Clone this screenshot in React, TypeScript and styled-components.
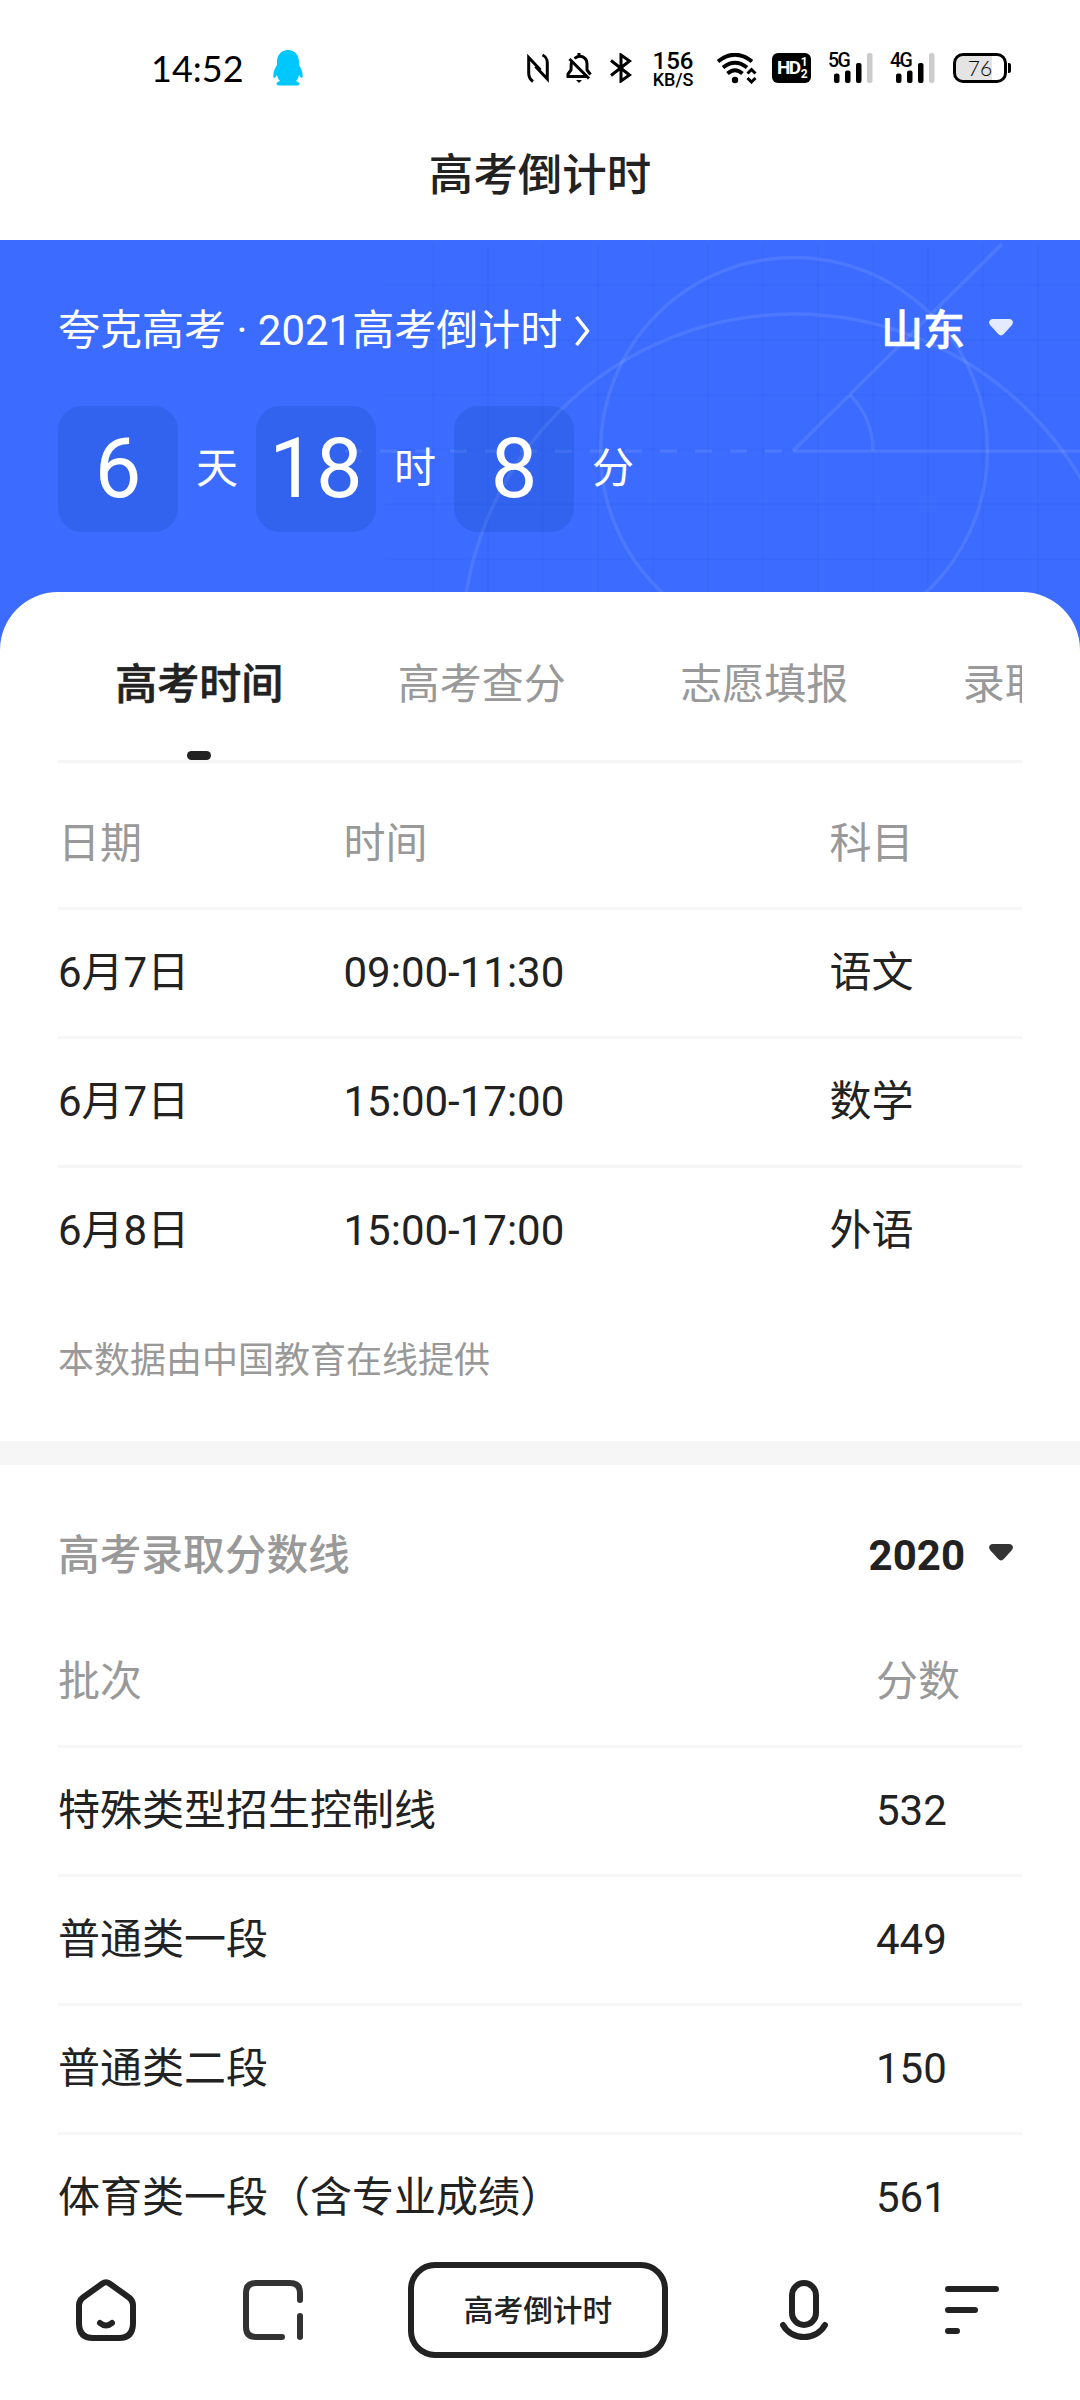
import type { ReactNode } from 'react'
import styled, { createGlobalStyle } from 'styled-components'

const INK = '#222'
const MUTED = '#999'
const BLUE = '#3b6cff'
const LINE = '#f6f6f6'

const countdown = [
	{ value: 6, unit: '天' },
	{ value: 18, unit: '时' },
	{ value: 8, unit: '分' }
]

const tabs = ['高考时间', '高考查分', '志愿填报', '录取时间']

const exams = [
	{ date: '6月7日', time: '09:00-11:30', subject: '语文' },
	{ date: '6月7日', time: '15:00-17:00', subject: '数学' },
	{ date: '6月8日', time: '15:00-17:00', subject: '外语' }
]

const scores = [
	{ batch: '特殊类型招生控制线', score: 532 },
	{ batch: '普通类一段', score: 449 },
	{ batch: '普通类二段', score: 150 },
	{ batch: '体育类一段（含专业成绩）', score: 561 }
]

export default function App () {
	return (
		<Page>
			<GlobalStyle />
			<StatusBar />
			<TitleBar>高考倒计时</TitleBar>
			<Banner>
				<BannerDrawing />
				<BannerHead>
					<BannerLink>
						夸克高考 · 2021高考倒计时
						<svg width='16' height='30' viewBox='0 0 16 30' fill='none' stroke='#fff' strokeWidth='3.500'>
							<path d='M1.500 1L12.500 15L1.500 29' />
						</svg>
					</BannerLink>
					<Picker $color='#fff'>山东<Caret color='#e5ebff' /></Picker>
				</BannerHead>
				<Countdown>
					{countdown.map(({ value, unit }) => (
						<CountdownPart key={unit}>
							<Digits>{value}</Digits>
							<span>{unit}</span>
						</CountdownPart>
					))}
				</Countdown>
			</Banner>
			<Card>
				<Tabs>
					{tabs.map((tab, i) => <Tab key={tab} $active={i === 0}>{tab}</Tab>)}
				</Tabs>
				<ExamRow $head>
					<span>日期</span><span>时间</span><span>科目</span>
				</ExamRow>
				{exams.map(({ date, time, subject }) => (
					<ExamRow key={subject}>
						<span>{date}</span><span>{time}</span><span>{subject}</span>
					</ExamRow>
				))}
				<Source>本数据由中国教育在线提供</Source>
			</Card>
			<Scores>
				<ScoresHead>
					<h2>高考录取分数线</h2>
					<Picker $color={INK}><b>2020</b><Caret color='#333' /></Picker>
				</ScoresHead>
				<ScoreRow $head>
					<span>批次</span><span>分数</span>
				</ScoreRow>
				{scores.map(({ batch, score }) => (
					<ScoreRow key={batch}>
						<span>{batch}</span><span>{score}</span>
					</ScoreRow>
				))}
			</Scores>
			<BottomBar />
		</Page>
	)
}

function StatusBar () {
	return (
		<Status>
			<Clock>14:52</Clock>
			<StatusIcon $left={31} width='30' height='36' viewBox='0 0 30 36' fill='#00c8ff'>
				<path d='M15 0C8 0 4 5 4 12V15C2 18 0 22 .3 27C.5 29 2 28 4 25C4.500 28 5.500 29.500 7 31C5 31.500 3.500 32.500 3.500 34C3.500 35.500 5 35.500 8 35.500H22C25 35.500 26.500 35.500 26.500 34C26.500 32.500 25 31.500 23 31C24.500 29.500 25.500 28 26 25C28 28 29.500 29 29.700 27C30 22 28 18 26 15V12C26 5 22 0 15 0Z' />
			</StatusIcon>
			<Spacer />
			<StatusIcon width='22' height='30' viewBox='0 0 22 30' fill='none' stroke='#000' strokeWidth='3'>
				<path d='M6 28.500C2.500 26 1.700 24 1.700 20V4.500L13.500 17' />
				<path d='M15.500 2C19.500 4 20.300 6 20.300 10V26L8.500 13.500' />
			</StatusIcon>
			<StatusIcon $left={17} width='26' height='32' viewBox='0 0 26 32' fill='none' stroke='#000' strokeWidth='3'>
				<path d='M8.500 6.500C14 1.500 21 5.500 21 12V18L24.500 22.500' />
				<path d='M5.500 10C5 12 5.200 15 5 18L2 22V24.500H20' />
				<path d='M3.500 7L23 26.500' />
				<path d='M13 1V4' />
				<path d='M10 28H16L13 31Z' fill='#000' stroke='none' />
			</StatusIcon>
			<StatusIcon $left={18} width='22' height='30' viewBox='0 0 22 30' fill='none' stroke='#000' strokeWidth='3'>
				<path d='M1 7.500L19.500 22L11 28V2L19.500 8L1 22.500' />
			</StatusIcon>
			<Speed>
				<b>156</b>
				<span>KB/S</span>
			</Speed>
			<StatusIcon $left={23} width='40' height='31' viewBox='0 0 40 31' fill='none' stroke='#000'>
				<path d='M1 8.500Q18 -5 35 8.500' strokeWidth='4' />
				<path d='M6 14.500Q18 5 30 14.500' strokeWidth='4' />
				<path d='M10.500 20.500Q18 14 25.500 20.500' strokeWidth='4' />
				<circle cx='18' cy='27' r='3.200' fill='#000' stroke='none' />
				<path d='M30.500 20.500L34.500 16.500L38.500 20.500M30.500 25L34.500 29L38.500 25' strokeWidth='3' />
			</StatusIcon>
			<HdBadge>
				HD
				<small><span>1</span><span>2</span></small>
			</HdBadge>
			<Signal label='5G' />
			<Signal label='4G' />
			<Battery><span>76</span></Battery>
		</Status>
	)
}

function Signal ({ label }: { label: string }) {
	return (
		<SignalBox>
			<span>{label}</span>
			<svg width='39' height='30' viewBox='0 0 39 30'>
				<rect x='0' y='20.500' width='5.500' height='9.500' rx='2' />
				<rect x='11' y='17.500' width='5.500' height='12.500' rx='2' />
				<rect x='22' y='10' width='5.500' height='20' rx='2' />
				<rect x='33' y='0' width='5.500' height='30' rx='2' fill='#ccc' />
			</svg>
		</SignalBox>
	)
}

function Caret ({ color }: { color: string }) {
	return (
		<svg width='24' height='17' viewBox='0 0 24 17' fill={color}>
			<path d='M4 0H20C23.500 0 25 3 23 6L15 14.800Q12 18 9 14.800L1 6C-1 3 .5 0 4 0Z' />
		</svg>
	)
}

// Geometry sheet behind the countdown: grid, two circles and an angle
function BannerDrawing () {
	const columns = Array.from({ length: 12 }, (_, i) => 433 + i * 55)
	const rows = Array.from({ length: 6 }, (_, i) => 45 + i * 54.8)
	return (
		<Drawing width='1080' height='420' viewBox='0 0 1080 420' fill='none'>
			<g stroke='#1f4fd8' strokeOpacity='.1' strokeWidth='2'>
				{columns.map(x => <path key={x} d={`M${x} 5V420`} />)}
				{rows.map(y => <path key={y} d={`M385 ${y}H1080`} />)}
			</g>
			<g stroke='#fff' strokeOpacity='.09' strokeWidth='3.500'>
				<circle cx='794' cy='211' r='193.500' />
				<circle cx='794' cy='406' r='332' />
				<path d='M793 211H1080' />
				<path d='M793 211L1002 4' />
				<path d='M873 211A79 79 0 0 0 850 155' />
				<path d='M345 211H793' strokeDasharray='17 18' />
			</g>
		</Drawing>
	)
}

function BottomBar () {
	return (
		<Bottom>
			<NavIcon width='60' height='62'>
				<path d='M26.500 4.500Q30 2 33.500 4.500L53 18.500Q57 21.500 57 26V44Q57 59 43 59H17Q3 59 3 44V26Q3 21.500 7 18.500Z' />
				<path d='M24 44Q30 49 36 44' />
			</NavIcon>
			<NavIcon width='60' height='60' $color='#333'>
				<path d='M57 20V13Q57 3 47 3H13Q3 3 3 13V47Q3 57 13 57H39' />
				<path d='M57 36V57' />
			</NavIcon>
			<Current>高考倒计时</Current>
			<NavIcon width='48' height='60'>
				<rect x='12' y='3' width='24' height='42' rx='12' />
				<path d='M3 45C12 61 36 61 45 45' />
			</NavIcon>
			<NavIcon width='54' height='48'>
				<path d='M3 3H51M3 24H30M3 45H12' />
			</NavIcon>
		</Bottom>
	)
}

function NavIcon ({ width, height, $color = INK, children }: {
	width: string, height: string, $color?: string, children: ReactNode
}) {
	return (
		<svg
			width={width} height={height} viewBox={`0 0 ${width} ${height}`}
			fill='none' stroke={$color} strokeWidth='6' strokeLinecap='round'
		>
			{children}
		</svg>
	)
}

const GlobalStyle = createGlobalStyle`
	* {
		box-sizing: border-box;
	}
	body {
		margin: 0;
		background: #fff;
	}
	svg {
		display: block;
		flex: none;
	}
`

const Page = styled.main`
	display: flex;
	flex-direction: column;
	width: 1080px;
	height: 2400px;
	overflow: hidden;
	background: #fff;
	color: ${INK};
	font-family: Roboto, 'Noto Sans CJK SC', sans-serif;
	font-size: 42px;
	line-height: 60px;
	white-space: nowrap;
`

const Status = styled.header`
	display: flex;
	flex: none;
	align-items: center;
	height: 136px;
	padding: 0 69px 0 151px;
	color: #000;
`

const Clock = styled.span`
	width: 91px;
	font: 36px/40px Lato, sans-serif;
`

const Spacer = styled.span`
	flex: 1;
`

const StatusIcon = styled.svg<{ $left?: number }>`
	margin-left: ${({ $left = 0 }) => $left}px;
`

const Speed = styled.span`
	display: flex;
	flex-direction: column;
	align-items: center;
	width: 42px;
	margin: 3px 0 0 20px;
	font: 500 18px/18px Roboto, sans-serif;
	b {
		font-size: 24px;
		line-height: 20px;
		font-weight: 500;
	}
`

const HdBadge = styled.span`
	display: flex;
	align-items: center;
	justify-content: center;
	width: 39px;
	height: 30px;
	margin-left: 15px;
	border-radius: 6px;
	background: #000;
	color: #fff;
	font: 700 19px/30px Roboto, sans-serif;
	letter-spacing: -1.5px;
	small {
		display: flex;
		flex-direction: column;
		margin-left: 1px;
		font-size: 12px;
		line-height: 12px;
	}
`

const SignalBox = styled.span`
	position: relative;
	width: 44px;
	height: 30px;
	margin-left: 18px;
	svg {
		margin-left: 5px;
	}
	span {
		position: absolute;
		left: -1px;
		top: -1px;
		font: 500 19.5px/18px Roboto, sans-serif;
		letter-spacing: -1.5px;
	}
`

const Battery = styled.span`
	position: relative;
	width: 54px;
	height: 30px;
	margin: 0 4px 0 18px;
	border: 3px solid #000;
	border-radius: 10px;
	background: linear-gradient(90deg, #e4e4e4 76%, #fff 76%);
	font: 300 21px/24px Lato, sans-serif;
	text-align: center;
	&::after {
		content: '';
		position: absolute;
		right: -7px;
		top: 7px;
		width: 3px;
		height: 10px;
		border-radius: 0 2px 2px 0;
		background: #000;
	}
`

const TitleBar = styled.h1`
	flex: none;
	height: 104px;
	margin: 0;
	padding-top: 8px;
	font-size: 44.5px;
	font-weight: 500;
	line-height: 64px;
	text-align: center;
`

const Banner = styled.section`
	position: relative;
	flex: none;
	height: 420px;
	padding: 61px 67px 0 58px;
	background: ${BLUE};
	color: #fff;
`

const Drawing = styled.svg`
	position: absolute;
	left: 0;
	top: 0;
`

const BannerHead = styled.div`
	position: relative;
	display: flex;
	justify-content: space-between;
`

const BannerLink = styled.span`
	display: flex;
	align-items: center;
	gap: 13px;
`

const Picker = styled.span<{ $color: string }>`
	display: flex;
	align-items: center;
	gap: 24px;
	color: ${({ $color }) => $color};
	font-weight: 500;
	-webkit-text-stroke: .6px;
	b {
		font-weight: 700;
		-webkit-text-stroke: 0;
	}
	svg {
		margin-bottom: 7px;
	}
`

const Countdown = styled.div`
	position: relative;
	display: flex;
	gap: 18px;
	margin-top: 45px;
`

const CountdownPart = styled.div`
	display: flex;
	align-items: center;
	gap: 18px;
`

const Digits = styled.span`
	width: 120px;
	height: 126px;
	border-radius: 24px;
	background: rgba(0, 58, 160, .17);
	font-size: 83px;
	line-height: 126px;
	text-align: center;
`

const Card = styled.section`
	position: relative;
	flex: none;
	height: 849px;
	margin-top: -68px;
	padding: 0 58px;
	border-radius: 58px 58px 0 0;
	background: #fff;
`

const Tabs = styled.nav`
	display: flex;
	height: 171px;
	overflow: hidden;
	border-bottom: 3px solid ${LINE};
`

const Tab = styled.a<{ $active: boolean }>`
	display: flex;
	flex: none;
	flex-direction: column;
	align-items: center;
	justify-content: space-between;
	width: 282.5px;
	padding-top: 63px;
	color: ${({ $active }) => $active ? INK : MUTED};
	font-weight: ${({ $active }) => $active ? 500 : 400};
	-webkit-text-stroke: ${({ $active }) => $active ? .6 : 0}px;
	&::after {
		content: '';
		width: 24px;
		height: 9px;
		border-radius: 4.5px;
		background: ${({ $active }) => $active ? INK : 'transparent'};
	}
`

const ExamRow = styled.div<{ $head?: boolean }>`
	display: grid;
	grid-template-columns: 285.5px 486px 1fr;
	align-items: center;
	height: ${({ $head }) => $head ? 147 : 129}px;
	padding-top: ${({ $head }) => $head ? 18 : 0}px;
	border-bottom: 3px solid ${LINE};
	color: ${({ $head }) => $head ? MUTED : INK};
	&:nth-last-child(2) {
		border-bottom-color: transparent;
	}
`

const Source = styled.p`
	margin: 34px 0 0;
	color: ${MUTED};
	font-size: 36px;
	line-height: 60px;
`

const Scores = styled.section`
	flex: 1;
	min-height: 0;
	overflow: hidden;
	padding: 61px 58px 0;
	border-top: 24px solid ${LINE};
`

const ScoresHead = styled.div`
	display: flex;
	justify-content: space-between;
	height: 93px;
	padding-right: 9px;
	h2 {
		margin: 0;
		color: ${MUTED};
		font-size: 41.7px;
		font-weight: 500;
	}
	> span {
		height: 60px;
	}
`

const ScoreRow = styled.div<{ $head?: boolean }>`
	display: grid;
	grid-template-columns: 818px 1fr;
	align-items: center;
	height: 129px;
	border-bottom: 3px solid ${LINE};
	color: ${({ $head }) => $head ? MUTED : INK};
	&:last-child {
		border-bottom-color: transparent;
	}
`

const Bottom = styled.footer`
	display: grid;
	flex: none;
	grid-template-columns: 167px 165px 372px 165px 54px;
	align-items: center;
	height: 160px;
	padding: 0 81px 20px 76px;
	background: #fff;
`

const Current = styled.button`
	width: 260px;
	height: 96px;
	padding: 2px 0 0;
	border: 6px solid ${INK};
	border-radius: 27px;
	background: #fff;
	color: ${INK};
	font: 500 29.7px/40px Roboto, 'Noto Sans CJK SC', sans-serif;
`
